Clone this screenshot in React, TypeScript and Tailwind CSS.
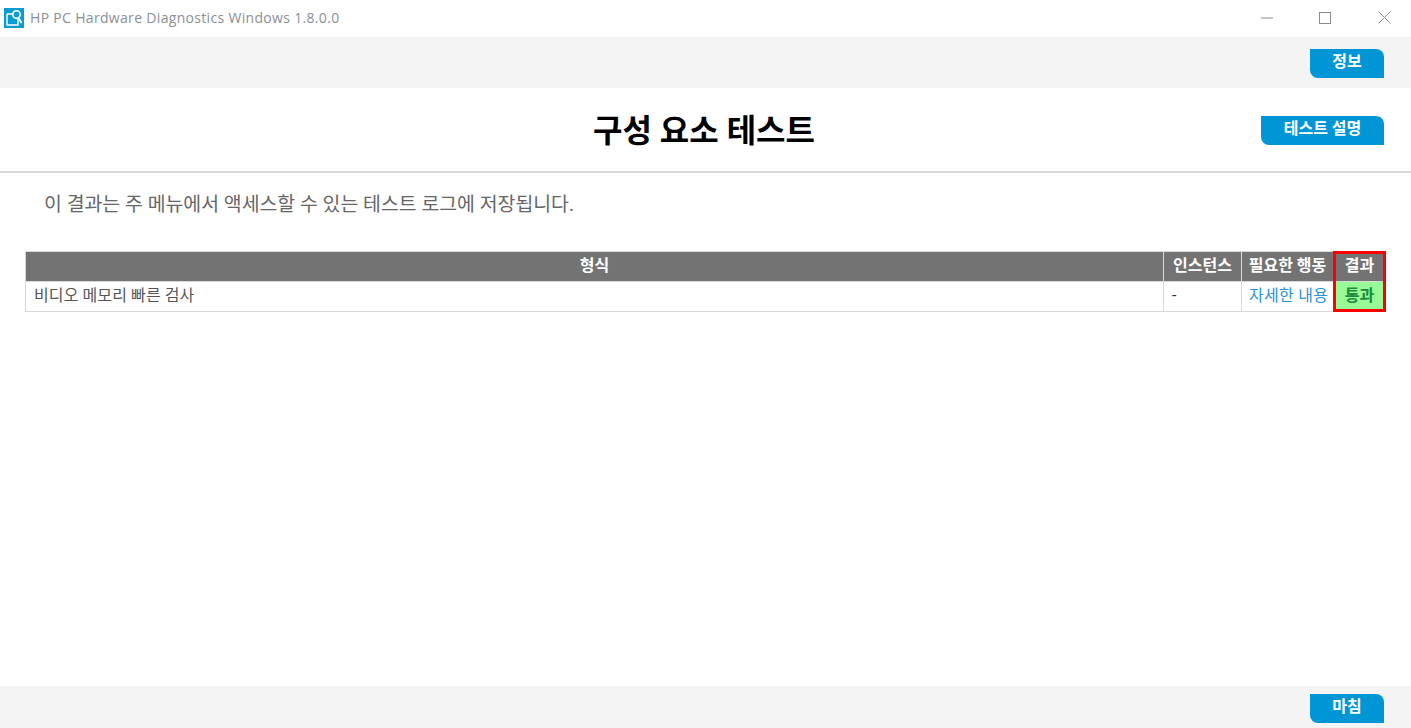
const cjk = "font-['Roboto','Noto_Sans_CJK_KR',sans-serif]";

function LeafButton({ label, width }: { label: string; width: string }) {
  return (
    <button
      className={`${width} h-[29px] bg-[#0096d6] text-white text-[16px] leading-[24px] font-bold rounded-tr-[8px] rounded-bl-[8px] pb-[4px]`}
    >
      {label}
    </button>
  );
}

function TitleBar() {
  return (
    <div className="h-[37px] flex items-center bg-white">
      <svg width="20" height="20" viewBox="0 0 20 20" className="ml-[4px] mb-[2px]">
        <rect width="20" height="20" fill="#0a9bd0" />
        <path d="M3 6h6M3 6v11h11v-6" stroke="#fff" strokeWidth="1.4" fill="none" />
        <circle cx="12.5" cy="6.5" r="3.7" stroke="#fff" strokeWidth="1.6" fill="none" />
        <path d="M14.5 10l3 5" stroke="#fff" strokeWidth="1.8" />
      </svg>
      <span className="ml-[6px] mb-[2px] text-[14px] text-[#8a8f96] font-['Open_Sans',sans-serif] tracking-[0.32px]">
        HP PC Hardware Diagnostics Windows 1.8.0.0
      </span>
      <div className="ml-auto flex items-center text-[#8c8c8c]">
        <svg width="12" height="12" viewBox="0 0 12 12" className="mr-[46px] mb-[2px]">
          <path d="M0 6h12" stroke="currentColor" strokeWidth="1" />
        </svg>
        <svg width="12" height="12" viewBox="0 0 12 12" className="mr-[47px] mb-[2px]">
          <rect x="0.5" y="0.5" width="11" height="11" stroke="currentColor" fill="none" />
        </svg>
        <svg width="13" height="13" viewBox="0 0 13 13" className="mr-[20px] mb-[2px]">
          <path d="M0.5 0.5l12 12M12.5 0.5l-12 12" stroke="currentColor" strokeWidth="1" />
        </svg>
      </div>
    </div>
  );
}

export default function App() {
  return (
    <div className={`h-[728px] w-[1411px] flex flex-col bg-white overflow-hidden ${cjk}`}>
      <TitleBar />

      <div className="h-[51px] bg-[#f4f4f4] flex items-start justify-end pt-[12px] pr-[27px]">
        <LeafButton label="정보" width="w-[74px]" />
      </div>

      <div className="relative h-[85px] border-b-2 border-[#d9d9d9] flex items-center justify-center">
        <h1 className="text-[32px] font-bold text-black mt-[2px] ml-[-3px]">구성 요소 테스트</h1>
        <div className="absolute right-[27px] top-[28px]">
          <LeafButton label="테스트 설명" width="w-[123px]" />
        </div>
      </div>

      <p className="mt-[17px] ml-[44px] text-[19.4px] leading-[29px] text-[#666]">
        이 결과는 주 메뉴에서 액세스할 수 있는 테스트 로그에 저장됩니다.
      </p>

      <div className="flex-1 pt-[32px] pl-[25px]">
        <table className="w-[1360px] table-fixed border-collapse text-[16px] leading-[24px]">
          <colgroup>
            <col className="w-[1138px]" />
            <col className="w-[78px]" />
            <col className="w-[92px]" />
            <col className="w-[52px]" />
          </colgroup>
          <thead>
            <tr className="h-[30px] bg-[#737373] text-white font-bold">
              <th className="border border-[#d8d8d8] p-0 pb-[1px]">형식</th>
              <th className="border border-[#d8d8d8] p-0 pb-[1px] whitespace-nowrap">인스턴스</th>
              <th className="border border-[#d8d8d8] p-0 pb-[1px] whitespace-nowrap">필요한 행동</th>
              <th className="border border-[#d8d8d8] p-0 pb-[1px]">결과</th>
            </tr>
          </thead>
          <tbody>
            <tr className="h-[30px] text-[#555]">
              <td className="border border-[#d8d8d8] pl-[8px] pb-[1px] tracking-[0.1px]">비디오 메모리 빠른 검사</td>
              <td className="border border-[#d8d8d8] pl-[8px] pb-[1px] text-[#333]">-</td>
              <td className="border border-[#d8d8d8] pl-[7px] pb-[1px] text-[#2a93d5] tracking-[0.3px] whitespace-nowrap">자세한 내용</td>
              <td className="border border-[#d8d8d8] pb-[1px] bg-[#98fb98] text-[#1a8a3a] font-bold text-center relative">
                통과
                <div className="absolute left-[-1px] right-[-1px] top-[-31px] bottom-[-1px] border-[3px] border-[#ff0000]" />
              </td>
            </tr>
          </tbody>
        </table>
      </div>

      <div className="h-[42px] bg-[#f4f4f4] flex items-start justify-end pt-[8px] pr-[27px]">
        <LeafButton label="마침" width="w-[74px]" />
      </div>
    </div>
  );
}
